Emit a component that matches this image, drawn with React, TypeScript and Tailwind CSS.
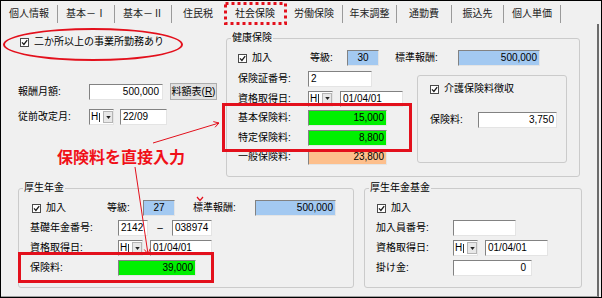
import React from "react";

const sunken =
  "border border-t-[#828282] border-l-[#828282] border-r-[#e4e4e4] border-b-[#e4e4e4]";

const tabs = [
  { label: "個人情報", w: "w-[57px]", sep: true },
  { label: "基本－Ⅰ", w: "w-[57px]", sep: true },
  { label: "基本－Ⅱ", w: "w-[57px]", sep: true },
  { label: "住民税", w: "w-[52px]", sep: false },
  { label: "社会保険", w: "w-[62px]", sep: false, active: true },
  { label: "労働保険", w: "w-[57px]", sep: true },
  { label: "年末調整", w: "w-[54px]", sep: true },
  { label: "通勤費", w: "w-[55px]", sep: true },
  { label: "振込先", w: "w-[52px]", sep: true },
  { label: "個人単価", w: "w-[57px]", sep: true },
];

function Check({ label }: { label: string }) {
  return (
    <div className="flex items-center gap-[5px] h-[14px]">
      <span className="w-[9px] h-[9px] border border-[#4a4a4a] bg-white flex items-center justify-center">
        <svg viewBox="0 0 7 7" className="w-[7px] h-[7px]">
          <path d="M1 3.4 L2.9 5.4 L6.2 1.2" stroke="#1a1a1a" strokeWidth="1.3" fill="none" />
        </svg>
      </span>
      <span>{label}</span>
    </div>
  );
}

function Box({ cls, value, align = "justify-end" }: { cls: string; value?: string; align?: string }) {
  return (
    <div className={`h-[16px] ${sunken} flex items-center px-[2px] ${align} ${cls}`}>
      {value}
    </div>
  );
}

function Combo() {
  return (
    <div className={`w-[25px] h-[16px] ${sunken} bg-white flex items-center`}>
      <span className="pl-[1px]">H</span>
      <span className="w-[1px] h-[9px] bg-[#333] ml-[1px]" />
      <span className="ml-auto w-[10px] h-[12px] bg-[#e8e8e8] border border-[#b5b5b5] flex items-center justify-center">
        <svg viewBox="0 0 6 4" className="w-[5px] h-[3px]">
          <path d="M0 0 L6 0 L3 4 Z" fill="#222" />
        </svg>
      </span>
    </div>
  );
}

function Row({ label, lw, children }: { label: string; lw: string; children?: React.ReactNode }) {
  return (
    <div className="flex items-center h-[16px]">
      <span className={lw}>{label}</span>
      {children}
    </div>
  );
}

export default function App() {
  return (
    <div className="relative w-[602px] h-[298px] overflow-hidden border border-black bg-[#f0f0f0] text-[10px] leading-none text-black font-['Liberation_Sans','Noto_Sans_CJK_JP',sans-serif]">
      {/* tab strip */}
      <div className="flex h-[23px] items-center pt-[2px]">
        {tabs.map((t) => (
          <div
            key={t.label}
            className={`${t.w} h-[18px] flex items-center justify-center ${t.sep ? "border-r border-r-[#9a9a9a]" : ""} ${t.active ? "text-[#111]" : "text-[#222]"}`}
          >
            {t.label}
          </div>
        ))}
      </div>

      {/* tab page */}
      <div className="w-[598px] h-[273px] border-r-2 border-r-[#6b6b6b] border-b border-b-[#a0a0a0] pl-[17px]">
        <div className="flex">
          {/* left column */}
          <div className="w-[208px] flex flex-col">
            <div className="mt-[11px] ml-[2px]">
              <Check label="二か所以上の事業所勤務あり" />
            </div>
            <div className="mt-[34px] flex items-center h-[17px]">
              <span className="w-[71px]">報酬月額:</span>
              <Box cls="w-[74px] bg-white pr-[3px]" value="500,000" />
              <button className="ml-[7px] w-[47px] h-[17px] bg-[#e1e1e1] border border-[#adadad] flex items-center justify-center">
                料額表(<span className="underline">R</span>)
              </button>
            </div>
            <div className="mt-[9px] flex items-center h-[16px]">
              <span className="w-[71px]">従前改定月:</span>
              <Combo />
              <Box cls="ml-[6px] w-[47px] bg-white" value="22/09" align="justify-start" />
            </div>
          </div>

          {/* 健康保険 */}
          <fieldset className="mt-[7px] w-[354px] h-[146px] border border-[#cbcbcb] rounded-[3px]">
            <legend className="ml-[4px] px-[1px] leading-[14px]">健康保険</legend>
            <div className="pl-[11px] pt-[5px]">
              <div className="flex items-center h-[16px]">
                <div className="w-[72px]">
                  <Check label="加入" />
                </div>
                <span className="w-[37px]">等級:</span>
                <Box cls="w-[32px] bg-[#a3c9f1]" value="30" align="justify-center" />
                <span className="ml-[16px] w-[63px]">標準報酬:</span>
                <Box cls="w-[82px] bg-[#a3c9f1]" value="500,000" />
              </div>
              <div className="flex mt-[5px]">
                <div className="w-[179px] flex flex-col gap-[3.5px]">
                  <Row label="保険証番号:" lw="w-[70px]">
                    <Box cls="w-[64px] bg-white" value="2" align="justify-start" />
                  </Row>
                  <Row label="資格取得日:" lw="w-[70px]">
                    <Combo />
                    <Box cls="ml-[7px] w-[63px] bg-white" value="01/04/01" align="justify-start" />
                  </Row>
                  <Row label="基本保険料:" lw="w-[70px]">
                    <Box cls="w-[79px] bg-[#00f000]" value="15,000" />
                  </Row>
                  <Row label="特定保険料:" lw="w-[70px]">
                    <Box cls="w-[79px] bg-[#00f000]" value="8,800" />
                  </Row>
                  <Row label="一般保険料:" lw="w-[70px]">
                    <Box cls="w-[79px] bg-[#fdbf8c]" value="23,800" />
                  </Row>
                </div>
                <div className="mt-[4px] w-[150px] h-[88px] border border-[#cbcbcb] rounded-[3px] pl-[12px] pt-[6px]">
                  <Check label="介護保険料徴収" />
                  <div className="mt-[16px]">
                    <Row label="保険料:" lw="w-[48px]">
                      <Box cls="w-[79px] bg-white" value="3,750" />
                    </Row>
                  </div>
                </div>
              </div>
            </div>
          </fieldset>
        </div>

        <div className="flex gap-[10px] mt-[4px]">
          {/* 厚生年金 */}
          <fieldset className="w-[336px] h-[107px] border border-[#cbcbcb] rounded-[3px]">
            <legend className="ml-[4px] px-[1px] leading-[14px]">厚生年金</legend>
            <div className="pl-[11px] pt-[5px] flex flex-col gap-[4px]">
              <div className="flex items-center h-[16px]">
                <div className="w-[77px] pl-[2px]">
                  <Check label="加入" />
                </div>
                <span className="w-[36px]">等級:</span>
                <Box cls="w-[32px] bg-[#a3c9f1]" value="27" align="justify-center" />
                <span className="ml-[18px] w-[62px]">標準報酬:</span>
                <Box cls="w-[81px] bg-[#a3c9f1]" value="500,000" />
              </div>
              <Row label="基礎年金番号:" lw="w-[88px]">
                <Box cls="w-[30px] bg-white" value="2142" align="justify-start" />
                <span className="w-[24px] text-center">–</span>
                <Box cls="w-[40px] bg-white" value="038974" align="justify-start" />
              </Row>
              <Row label="資格取得日:" lw="w-[88px]">
                <Combo />
                <Box cls="ml-[7px] w-[62px] bg-white" value="01/04/01" align="justify-start" />
              </Row>
              <Row label="保険料:" lw="w-[88px]">
                <Box cls="w-[78px] bg-[#00f000]" value="39,000" />
              </Row>
            </div>
          </fieldset>

          {/* 厚生年金基金 */}
          <fieldset className="w-[218px] h-[107px] border border-[#cbcbcb] rounded-[3px]">
            <legend className="ml-[4px] px-[1px] leading-[14px]">厚生年金基金</legend>
            <div className="pl-[11px] pt-[5px] flex flex-col gap-[4px]">
              <div className="flex items-center h-[16px] pl-[1px]">
                <Check label="加入" />
              </div>
              <Row label="加入員番号:" lw="w-[77px]">
                <Box cls="w-[63px] bg-white" />
              </Row>
              <Row label="資格取得日:" lw="w-[77px]">
                <Combo />
                <Box cls="ml-[7px] w-[63px] bg-white" value="01/04/01" align="justify-start" />
              </Row>
              <Row label="掛け金:" lw="w-[77px]">
                <Box cls="w-[79px] bg-white pr-[5px]" value="0" />
              </Row>
            </div>
          </fieldset>
        </div>
      </div>

      {/* annotations */}
      <div className="absolute left-[2px] top-[27px] w-[180px] h-[33px] rounded-[50%] border-2 border-[#e3101c]" />
      <div className="absolute left-[221px] top-[102px] w-[190px] h-[49px] border-[3px] border-[#e3101c]" />
      <div className="absolute left-[17px] top-[251px] w-[196px] h-[31px] border-[3px] border-[#e3101c]" />
      <div className="absolute left-[56px] top-[147px] text-[16px] font-bold leading-none text-[#f01018] font-['Noto_Sans_CJK_JP',sans-serif]">
        保険料を直接入力
      </div>
      <svg className="absolute left-0 top-0 pointer-events-none" width="600" height="296" viewBox="0 0 600 296">
        <rect x="224.5" y="2.5" width="60" height="20" fill="none" stroke="#e3101c" strokeWidth="3" strokeDasharray="3 3" />
        <line x1="152" y1="142" x2="218" y2="122" stroke="#e3101c" strokeWidth="1" />
        <polyline points="214,126.3 218,122 212.3,120.6" fill="none" stroke="#e3101c" strokeWidth="1" />
        <line x1="134" y1="166" x2="147" y2="253" stroke="#e3101c" strokeWidth="1" />
        <polyline points="143.3,248.5 147,253 149.2,247.6" fill="none" stroke="#e3101c" strokeWidth="1" />
        <polyline points="196,196 199,199.5 202,196" fill="none" stroke="#e3101c" strokeWidth="1.2" />
      </svg>
    </div>
  );
}
